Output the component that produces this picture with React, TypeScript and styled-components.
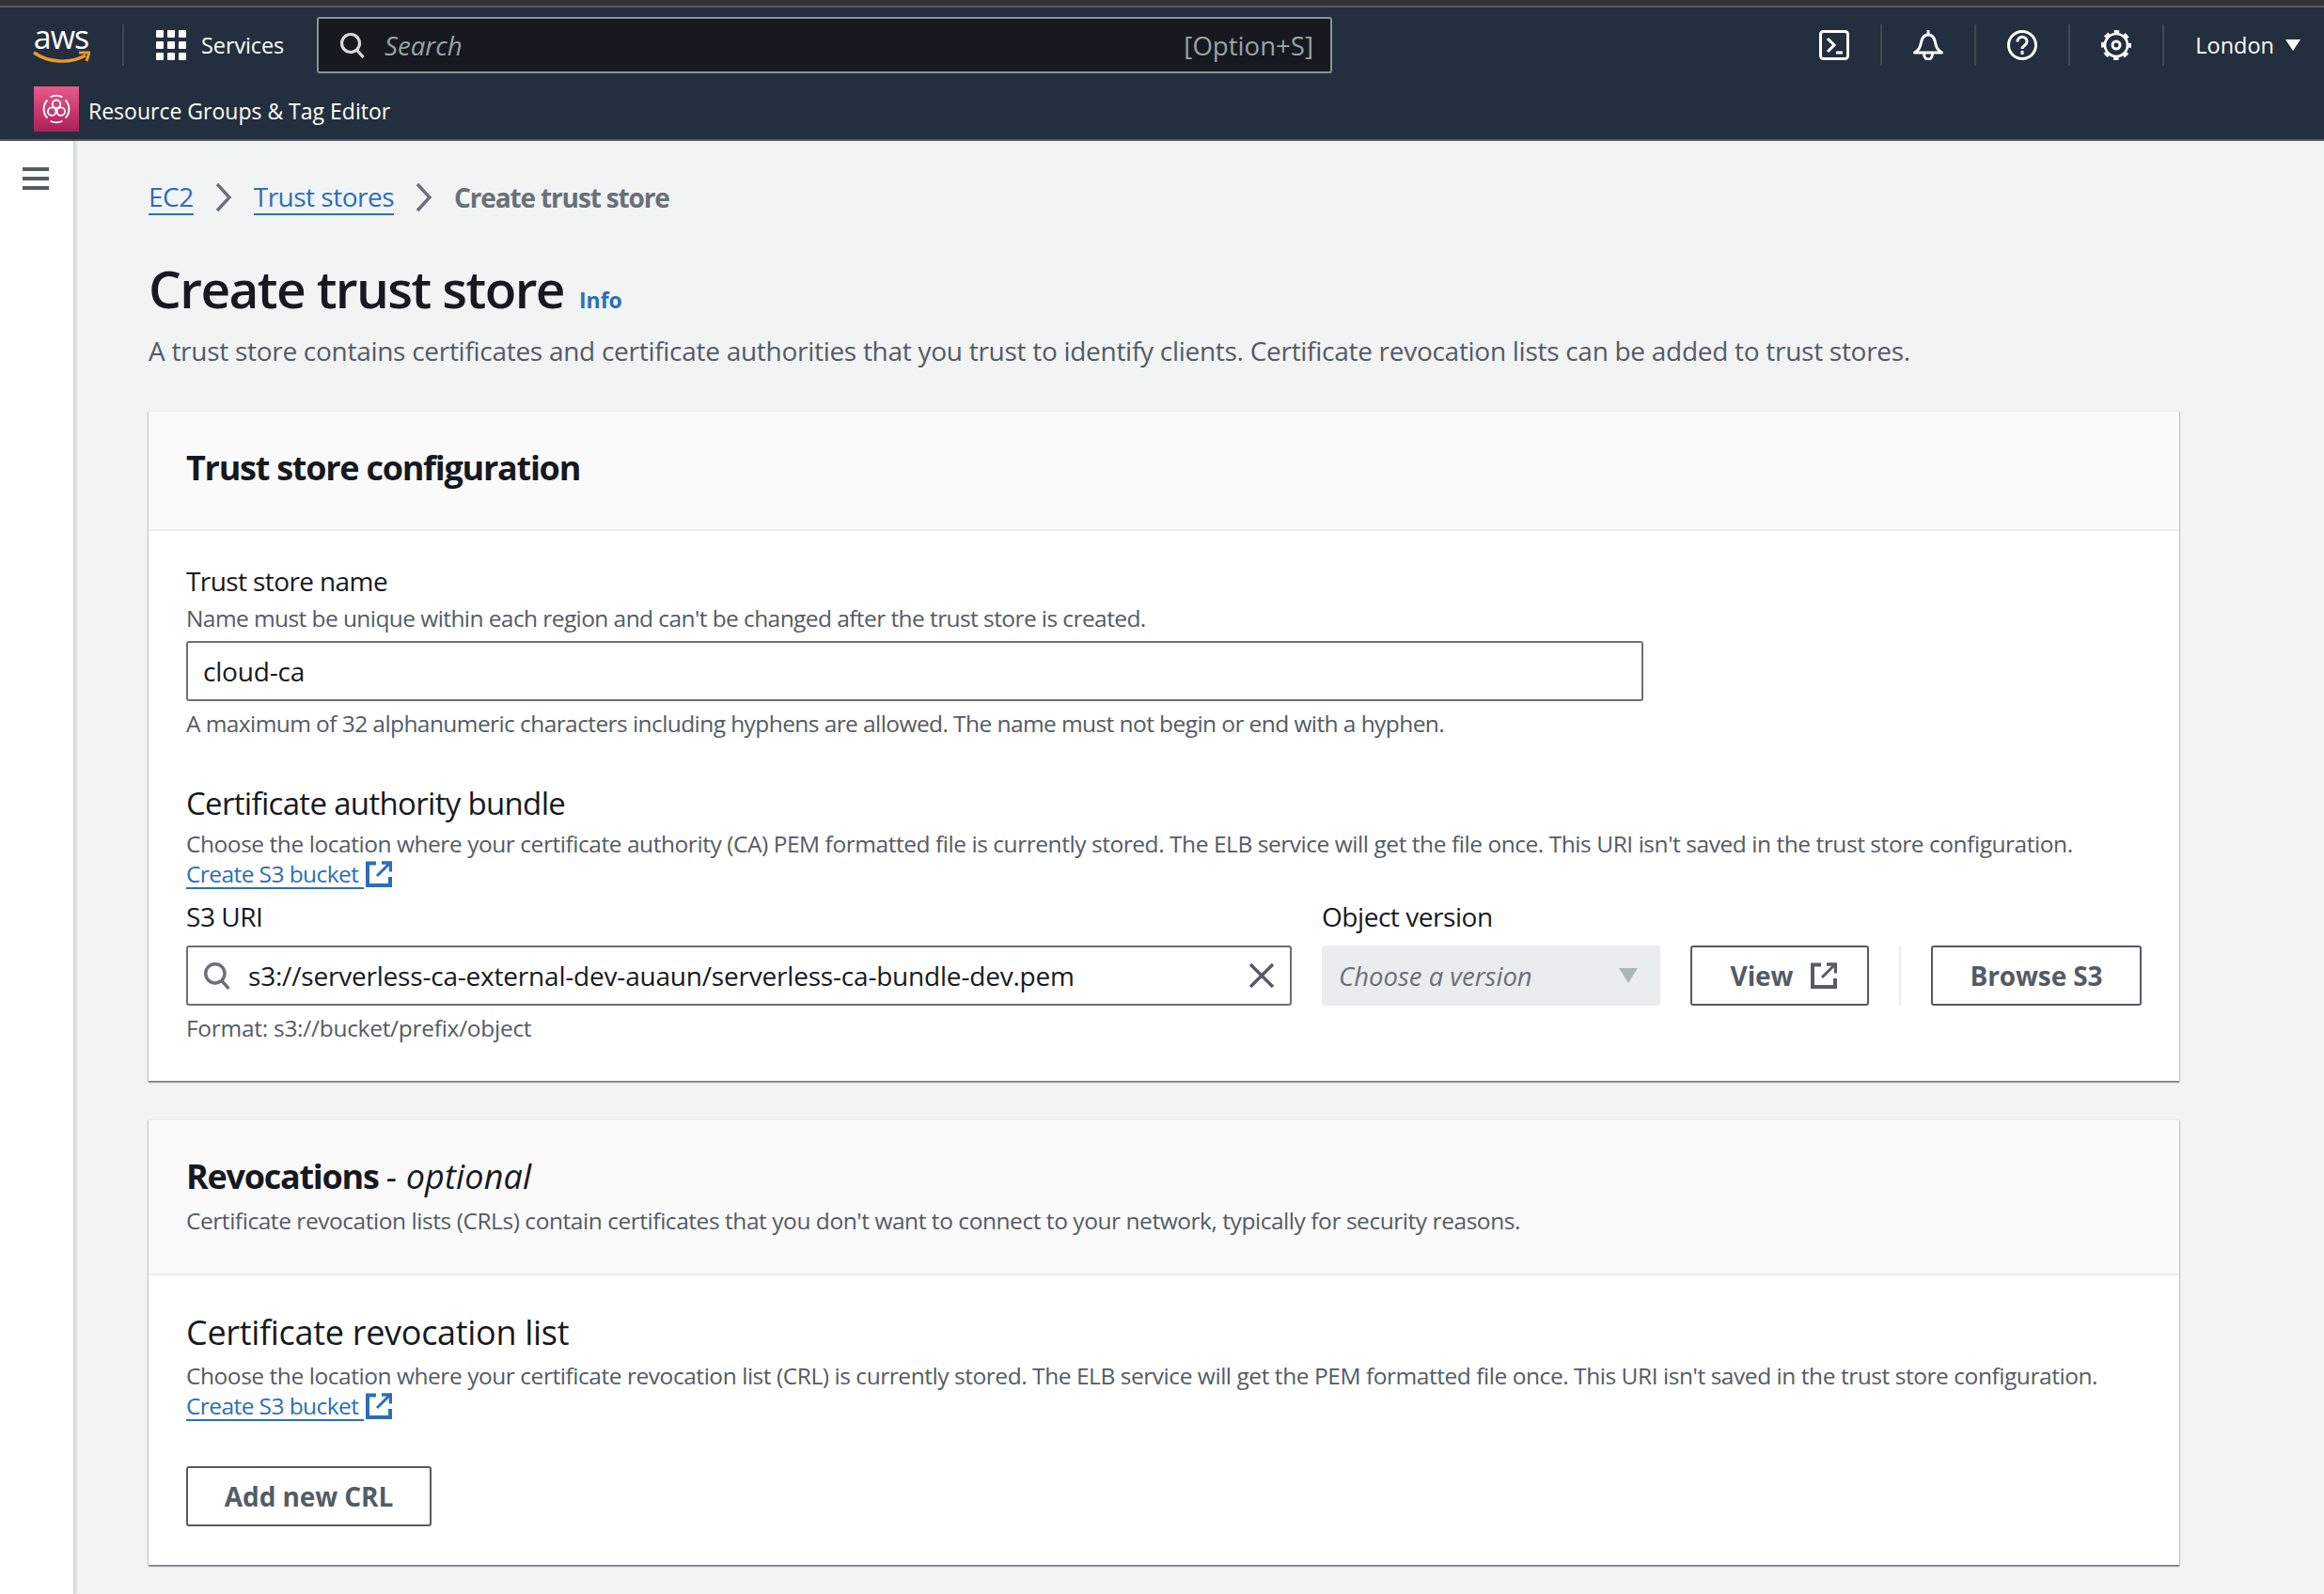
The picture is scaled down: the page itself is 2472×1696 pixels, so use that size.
import React from "react";
import styled, { createGlobalStyle } from "styled-components";

const Global = createGlobalStyle`
  html, body { margin: 0; padding: 0; background: #f2f3f3; }
  body { font-family: "Open Sans", "Noto Sans", sans-serif; color: #16191f; }
  * { box-sizing: border-box; }
`;

const Page = styled.div`
  width: 2472px;
  height: 1696px;
  overflow: hidden;
  display: flex;
  flex-direction: column;
`;

const TopStrip = styled.div`
  height: 8px;
  background: #333;
  border-bottom: 2px solid #5a5c5e;
`;

const Header = styled.header`
  height: 142px;
  background: #232f3e;
  border-bottom: 2px solid #545b64;
  color: #fff;
  display: flex;
  flex-direction: column;
`;

const NavRow = styled.div`
  height: 80px;
  display: flex;
  align-items: center;
  padding-left: 34px;
`;

const Logo = styled.div`
  width: 62px;
  height: 44px;
  position: relative;
  display: flex;
  justify-content: center;
`;

const LogoText = styled.span`
  font-size: 34px;
  line-height: 34px;
  margin-top: -4px;
  letter-spacing: -1px;
  color: #fff;
`;

const Smile = styled.svg`
  position: absolute;
  left: 0;
  bottom: 0;
`;

const NavDivider = styled.div<{ $left?: number }>`
  width: 2px;
  height: 44px;
  background: #414750;
  margin-left: ${(p) => p.$left ?? 0}px;
`;

const Services = styled.div`
  display: flex;
  align-items: center;
  gap: 16px;
  font-size: 23.5px;
  letter-spacing: -0.1px;
  margin-left: 34px;
  width: 171px;
`;

const SearchBox = styled.div`
  width: 1080px;
  height: 60px;
  background: #16191f;
  border: 2px solid #879596;
  border-radius: 3px;
  display: flex;
  align-items: center;
  padding: 0 18px 0 22px;
  gap: 20px;
  color: #95a5a6;
  font-size: 27.6px;
`;

const SearchHint = styled.span`
  font-style: italic;
  flex: 1;
`;

const NavRight = styled.div`
  margin-left: auto;
  display: flex;
  align-items: center;
  height: 44px;
`;

const NavIconCell = styled.div`
  width: 98px;
  display: flex;
  justify-content: center;
  align-items: center;
`;

const Region = styled.div`
  display: flex;
  align-items: center;
  gap: 12px;
  font-size: 23.5px;
  padding: 0 25px 0 33px;
`;

const SubRow = styled.div`
  height: 60px;
  display: flex;
  align-items: center;
  padding-left: 36px;
  gap: 10px;
  font-size: 23px;
`;

const ServiceBadge = styled.div`
  width: 48px;
  height: 48px;
  margin-top: -4px;
  background: linear-gradient(to top, #a8215a, #ea5a8a);
  display: flex;
  align-items: center;
  justify-content: center;
`;

const Body = styled.div`
  flex: 1;
  display: flex;
  min-height: 0;
`;

const Side = styled.aside`
  width: 80px;
  background: #fff;
  border-right: 2px solid #d5dbdb;
  box-shadow: 1px 0 2px rgba(0, 0, 0, 0.12);
  padding: 28px 0 0 24px;
`;

const Main = styled.main`
  flex: 1;
  padding: 42px 0 0 78px;
  width: 2240px;
`;

const Crumbs = styled.nav`
  display: flex;
  align-items: center;
  height: 36px;
  font-size: 28px;
  gap: 22px;
`;

const CrumbLink = styled.span`
  color: #2a6fb8;
  border-bottom: 2px solid #2a6fb8;
  line-height: 36px;
  letter-spacing: -0.5px;
`;

const CrumbCurrent = styled.span`
  color: #687078;
  font-weight: 700;
  letter-spacing: -1.14px;
`;

const TitleRow = styled.div`
  display: flex;
  align-items: baseline;
  gap: 16px;
  margin-top: 48px;
  height: 62px;
`;

const Title = styled.h1`
  margin: 0;
  font-size: 55px;
  line-height: 62px;
  font-weight: 600;
  letter-spacing: -1.6px;
  color: #16191f;
`;

const InfoLink = styled.span`
  font-size: 23px;
  font-weight: 700;
  color: #2a6fb8;
`;

const Lead = styled.p`
  margin: 17px 0 0;
  font-size: 28px;
  line-height: 36px;
  letter-spacing: -0.28px;
  color: #545b64;
`;

const Card = styled.section<{ $top: number; $height: number }>`
  width: 2160px;
  height: ${(p) => p.$height}px;
  margin-top: ${(p) => p.$top}px;
  background: #fff;
  box-shadow: 0 2px 1px 0 rgba(0, 28, 36, 0.35), 1px 1px 1px 0 rgba(0, 28, 36, 0.15),
    -1px 1px 1px 0 rgba(0, 28, 36, 0.15);
  display: flex;
  flex-direction: column;
`;

const CardHead = styled.div<{ $height: number }>`
  height: ${(p) => p.$height}px;
  background: #fafafa;
  border-top: 1px solid #eaeded;
  border-bottom: 2px solid #eaeded;
  padding: 38px 40px 0;
`;

const CardTitle = styled.h2`
  margin: 0;
  font-size: 36px;
  line-height: 44px;
  font-weight: 700;
  letter-spacing: -1.26px;
`;

const Optional = styled.span`
  font-weight: 400;
  font-style: italic;
  letter-spacing: 0.15px;
`;

const CardBody = styled.div<{ $top: number }>`
  padding: ${(p) => p.$top}px 40px 0;
`;

const Label = styled.div`
  font-size: 28px;
  line-height: 36px;
  letter-spacing: -0.6px;
`;

const SectionLabel = styled.div<{ $top?: number; $size?: number; $spacing?: number }>`
  font-size: ${(p) => p.$size ?? 33}px;
  line-height: 42px;
  letter-spacing: ${(p) => p.$spacing ?? -0.68}px;
  margin-top: ${(p) => p.$top ?? 0}px;
`;

const Hint = styled.div<{ $top?: number; $spacing?: number }>`
  font-size: 24.5px;
  line-height: 32px;
  letter-spacing: ${(p) => p.$spacing ?? -0.45}px;
  color: #545b64;
  margin-top: ${(p) => p.$top ?? 0}px;
`;

const ExtLink = styled.span`
  display: inline-flex;
  align-items: center;
  gap: 2px;
  font-size: 24.5px;
  line-height: 30px;
  letter-spacing: -0.58px;
  color: #2a6fb8;
  height: 32px;
`;

const ExtText = styled.span`
  border-bottom: 2px solid #2a6fb8;
  padding-right: 6px;
  line-height: 29px;
`;

const Input = styled.div<{ $width: number; $top?: number }>`
  width: ${(p) => p.$width}px;
  height: 64px;
  margin-top: ${(p) => p.$top ?? 0}px;
  border: 2px solid #687078;
  border-radius: 3px;
  background: #fff;
  display: flex;
  align-items: center;
  padding: 0 16px;
  font-size: 28px;
  letter-spacing: -0.2px;
  color: #16191f;
`;

const UriInput = styled(Input)`
  gap: 18px;
`;

const UriValue = styled.span`
  flex: 1;
  white-space: nowrap;
`;

const S3Row = styled.div`
  display: flex;
  align-items: flex-start;
  margin-top: 11px;
`;

const FieldCol = styled.div<{ $left?: number }>`
  display: flex;
  flex-direction: column;
  margin-left: ${(p) => p.$left ?? 0}px;
`;

const RowLabelSpacer = styled.div`
  height: 49px;
`;

const FieldLabel = styled.div`
  font-size: 28px;
  line-height: 36px;
  height: 49px;
  letter-spacing: -0.45px;
`;

const SelectBox = styled.div`
  width: 360px;
  height: 64px;
  background: #eaeded;
  border-radius: 3px;
  display: flex;
  align-items: center;
  justify-content: space-between;
  padding: 0 24px 0 18px;
  font-size: 27.5px;
  font-style: italic;
  color: #687078;
`;

const OutlineButton = styled.div<{ $width: number; $top?: number; $padLeft?: number }>`
  width: ${(p) => p.$width}px;
  height: 64px;
  margin-top: ${(p) => p.$top ?? 0}px;
  padding-left: ${(p) => p.$padLeft ?? 0}px;
  border: 2px solid #545b64;
  border-radius: 3px;
  background: #fff;
  display: flex;
  align-items: center;
  justify-content: center;
  gap: 19px;
  font-size: 28px;
  font-weight: 700;
  letter-spacing: -0.1px;
  color: #545b64;
`;

const ButtonRule = styled.div`
  width: 2px;
  height: 64px;
  background: #eaeded;
  margin: 0 32px;
`;

const Tri = styled.svg`
  flex: none;
`;

const ExternalIcon = ({ color, size = 28 }: { color: string; size?: number }) => (
  <svg width={size} height={size} viewBox="0 0 28 28" fill="none" stroke={color} strokeWidth="4">
    <path d="M11 2.500H2v23.500h24v-9" />
    <path d="M12 16L25 3" strokeWidth="3" />
    <path d="M17 2h9.500v9.500" strokeWidth="3.400" />
  </svg>
);

const SearchIcon = ({ color, size }: { color: string; size: number }) => (
  <svg width={size} height={size} viewBox="0 0 28 28" fill="none" stroke={color} strokeWidth="3.2">
    <circle cx="12" cy="12" r="9.5" />
    <path d="M18.5 19l7 8" />
  </svg>
);

const Chevron = () => (
  <svg width="20" height="32" viewBox="0 0 20 32" fill="none" stroke="#687078" strokeWidth="3.4">
    <path d="M3 2l13 14L3 30" />
  </svg>
);

const Grid = () => (
  <svg width="32" height="32" viewBox="0 0 32 32" fill="#fff">
    {[0, 12, 24].map((y) =>
      [0, 12, 24].map((x) => <rect key={`${x}-${y}`} x={x} y={y} width="8" height="8" rx="1" />)
    )}
  </svg>
);

const App = () => (
  <Page>
    <Global />
    <TopStrip />
    <Header>
      <NavRow>
        <Logo>
          <LogoText>aws</LogoText>
          <Smile width="62" height="16" viewBox="0 0 62 16" fill="none">
            <path d="M2 2c16 11 38 12 55 3" stroke="#ec9a27" strokeWidth="3.4" />
            <path d="M50 2h11l-3 9" stroke="#ec9a27" strokeWidth="3" />
          </Smile>
        </Logo>
        <NavDivider $left={34} />
        <Services>
          <Grid />
          <span>Services</span>
        </Services>
        <SearchBox>
          <SearchIcon color="#d5dbdb" size={28} />
          <SearchHint>Search</SearchHint>
          <span>[Option+S]</span>
        </SearchBox>
        <NavRight>
          <NavIconCell>
            <svg width="32" height="32" viewBox="0 0 32 32" fill="none" stroke="#fff" strokeWidth="3">
              <rect x="1.500" y="1.500" width="29" height="29" rx="3" />
              <path d="M9 9l7 7-7 7" />
              <path d="M18 24h7" />
            </svg>
          </NavIconCell>
          <NavDivider />
          <NavIconCell>
            <svg width="32" height="32" viewBox="0 0 32 32" fill="none" stroke="#fff" strokeWidth="3">
              <path d="M1.500 24c5-3 6-6 7-11 1-5 3-8 7.500-8s6.500 3 7.500 8c1 5 2 8 7 11z" strokeLinejoin="round" />
              <path d="M16 0v5" />
              <path d="M11.500 25c0 8 9 8 9 0" />
            </svg>
          </NavIconCell>
          <NavDivider />
          <NavIconCell>
            <svg width="32" height="32" viewBox="0 0 32 32" fill="none" stroke="#fff" strokeWidth="3">
              <circle cx="16" cy="16" r="14.500" />
              <path d="M11 12.500c0-7 10-7 10 0 0 4-5 4-5 7.500" />
              <path d="M16 22v4" />
            </svg>
          </NavIconCell>
          <NavDivider />
          <NavIconCell>
            <svg width="32" height="32" viewBox="0 0 32 32" fill="none" stroke="#fff" strokeWidth="2.6">
              <circle cx="16" cy="16" r="12" />
              <circle cx="16" cy="16" r="14.500" strokeWidth="3" strokeDasharray="5.700 5.700" strokeDashoffset="2.850" />
              <circle cx="16" cy="16" r="4" strokeWidth="3" />
            </svg>
          </NavIconCell>
          <NavDivider />
          <Region>
            <span>London</span>
            <Tri width="16" height="14" viewBox="0 0 16 14" fill="#fff">
              <path d="M0 1h16L8 13z" />
            </Tri>
          </Region>
        </NavRight>
      </NavRow>
      <SubRow>
        <ServiceBadge>
          <svg width="34" height="34" viewBox="0 0 32 32" fill="none" stroke="#fff" strokeWidth="1.8">
            <path d="M7 7a13 13 0 0 0 0 18M25 7a13 13 0 0 1 0 18M10 4a13 13 0 0 1 12 0M10 28a13 13 0 0 0 12 0" />
            <circle cx="16" cy="11" r="4" />
            <circle cx="11.5" cy="18.5" r="4" />
            <circle cx="20.5" cy="18.5" r="4" />
          </svg>
        </ServiceBadge>
        <span>Resource Groups &amp; Tag Editor</span>
      </SubRow>
    </Header>
    <Body>
      <Side>
        <svg width="30" height="24" viewBox="0 0 30 24" fill="#545b64">
          <rect width="28" height="4" />
          <rect y="10" width="28" height="4" />
          <rect y="20" width="28" height="4" />
        </svg>
      </Side>
      <Main>
        <Crumbs>
          <CrumbLink>EC2</CrumbLink>
          <Chevron />
          <CrumbLink>Trust stores</CrumbLink>
          <Chevron />
          <CrumbCurrent>Create trust store</CrumbCurrent>
        </Crumbs>
        <TitleRow>
          <Title>Create trust store</Title>
          <InfoLink>Info</InfoLink>
        </TitleRow>
        <Lead>
          A trust store contains certificates and certificate authorities that you trust to identify clients. Certificate revocation lists can be added to trust stores.
        </Lead>
        <Card $top={46} $height={713}>
          <CardHead $height={128}>
            <CardTitle>Trust store configuration</CardTitle>
          </CardHead>
          <CardBody $top={35}>
            <Label>Trust store name</Label>
            <Hint $top={6} $spacing={-0.58}>Name must be unique within each region and can't be changed after the trust store is created.</Hint>
            <Input $width={1550} $top={8}>cloud-ca</Input>
            <Hint $top={8} $spacing={-0.58}>A maximum of 32 alphanumeric characters including hyphens are allowed. The name must not begin or end with a hyphen.</Hint>
            <SectionLabel $top={48}>Certificate authority bundle</SectionLabel>
            <Hint $top={6}>
              Choose the location where your certificate authority (CA) PEM formatted file is currently stored. The ELB service will get the file once. This URI isn't saved in the trust store configuration.
            </Hint>
            <ExtLink>
              <ExtText>Create S3 bucket</ExtText>
              <ExternalIcon color="#2a6fb8" />
            </ExtLink>
            <S3Row>
              <FieldCol>
                <FieldLabel>S3 URI</FieldLabel>
                <UriInput $width={1176}>
                  <SearchIcon color="#687078" size={30} />
                  <UriValue>s3://serverless-ca-external-dev-auaun/serverless-ca-bundle-dev.pem</UriValue>
                  <svg width="28" height="28" viewBox="0 0 28 28" fill="none" stroke="#545b64" strokeWidth="3.4">
                    <path d="M2 2l24 24M26 2L2 26" />
                  </svg>
                </UriInput>
                <Hint $top={8} $spacing={-0.28}>Format: s3://bucket/prefix/object</Hint>
              </FieldCol>
              <FieldCol $left={32}>
                <FieldLabel>Object version</FieldLabel>
                <SelectBox>
                  <span>Choose a version</span>
                  <Tri width="20" height="18" viewBox="0 0 20 18" fill="#aab7b8">
                    <path d="M0 1h20L10 17z" />
                  </Tri>
                </SelectBox>
              </FieldCol>
              <FieldCol $left={32}>
                <RowLabelSpacer />
                <OutlineButton $width={190} $padLeft={9}>
                  <span>View</span>
                  <ExternalIcon color="#545b64" />
                </OutlineButton>
              </FieldCol>
              <FieldCol>
                <RowLabelSpacer />
                <ButtonRule />
              </FieldCol>
              <FieldCol>
                <RowLabelSpacer />
                <OutlineButton $width={224}>Browse S3</OutlineButton>
              </FieldCol>
            </S3Row>
          </CardBody>
        </Card>
        <Card $top={41} $height={474}>
          <CardHead $height={166}>
            <CardTitle>
              Revocations <Optional>- optional</Optional>
            </CardTitle>
            <Hint $top={9}>Certificate revocation lists (CRLs) contain certificates that you don't want to connect to your network, typically for security reasons.</Hint>
          </CardHead>
          <CardBody $top={40}>
            <SectionLabel $size={36} $spacing={-0.3}>Certificate revocation list</SectionLabel>
            <Hint $top={9}>
              Choose the location where your certificate revocation list (CRL) is currently stored. The ELB service will get the PEM formatted file once. This URI isn't saved in the trust store configuration.
            </Hint>
            <ExtLink>
              <ExtText>Create S3 bucket</ExtText>
              <ExternalIcon color="#2a6fb8" />
            </ExtLink>
            <OutlineButton $width={261} $top={48}>Add new CRL</OutlineButton>
          </CardBody>
        </Card>
      </Main>
    </Body>
  </Page>
);

export default App;
